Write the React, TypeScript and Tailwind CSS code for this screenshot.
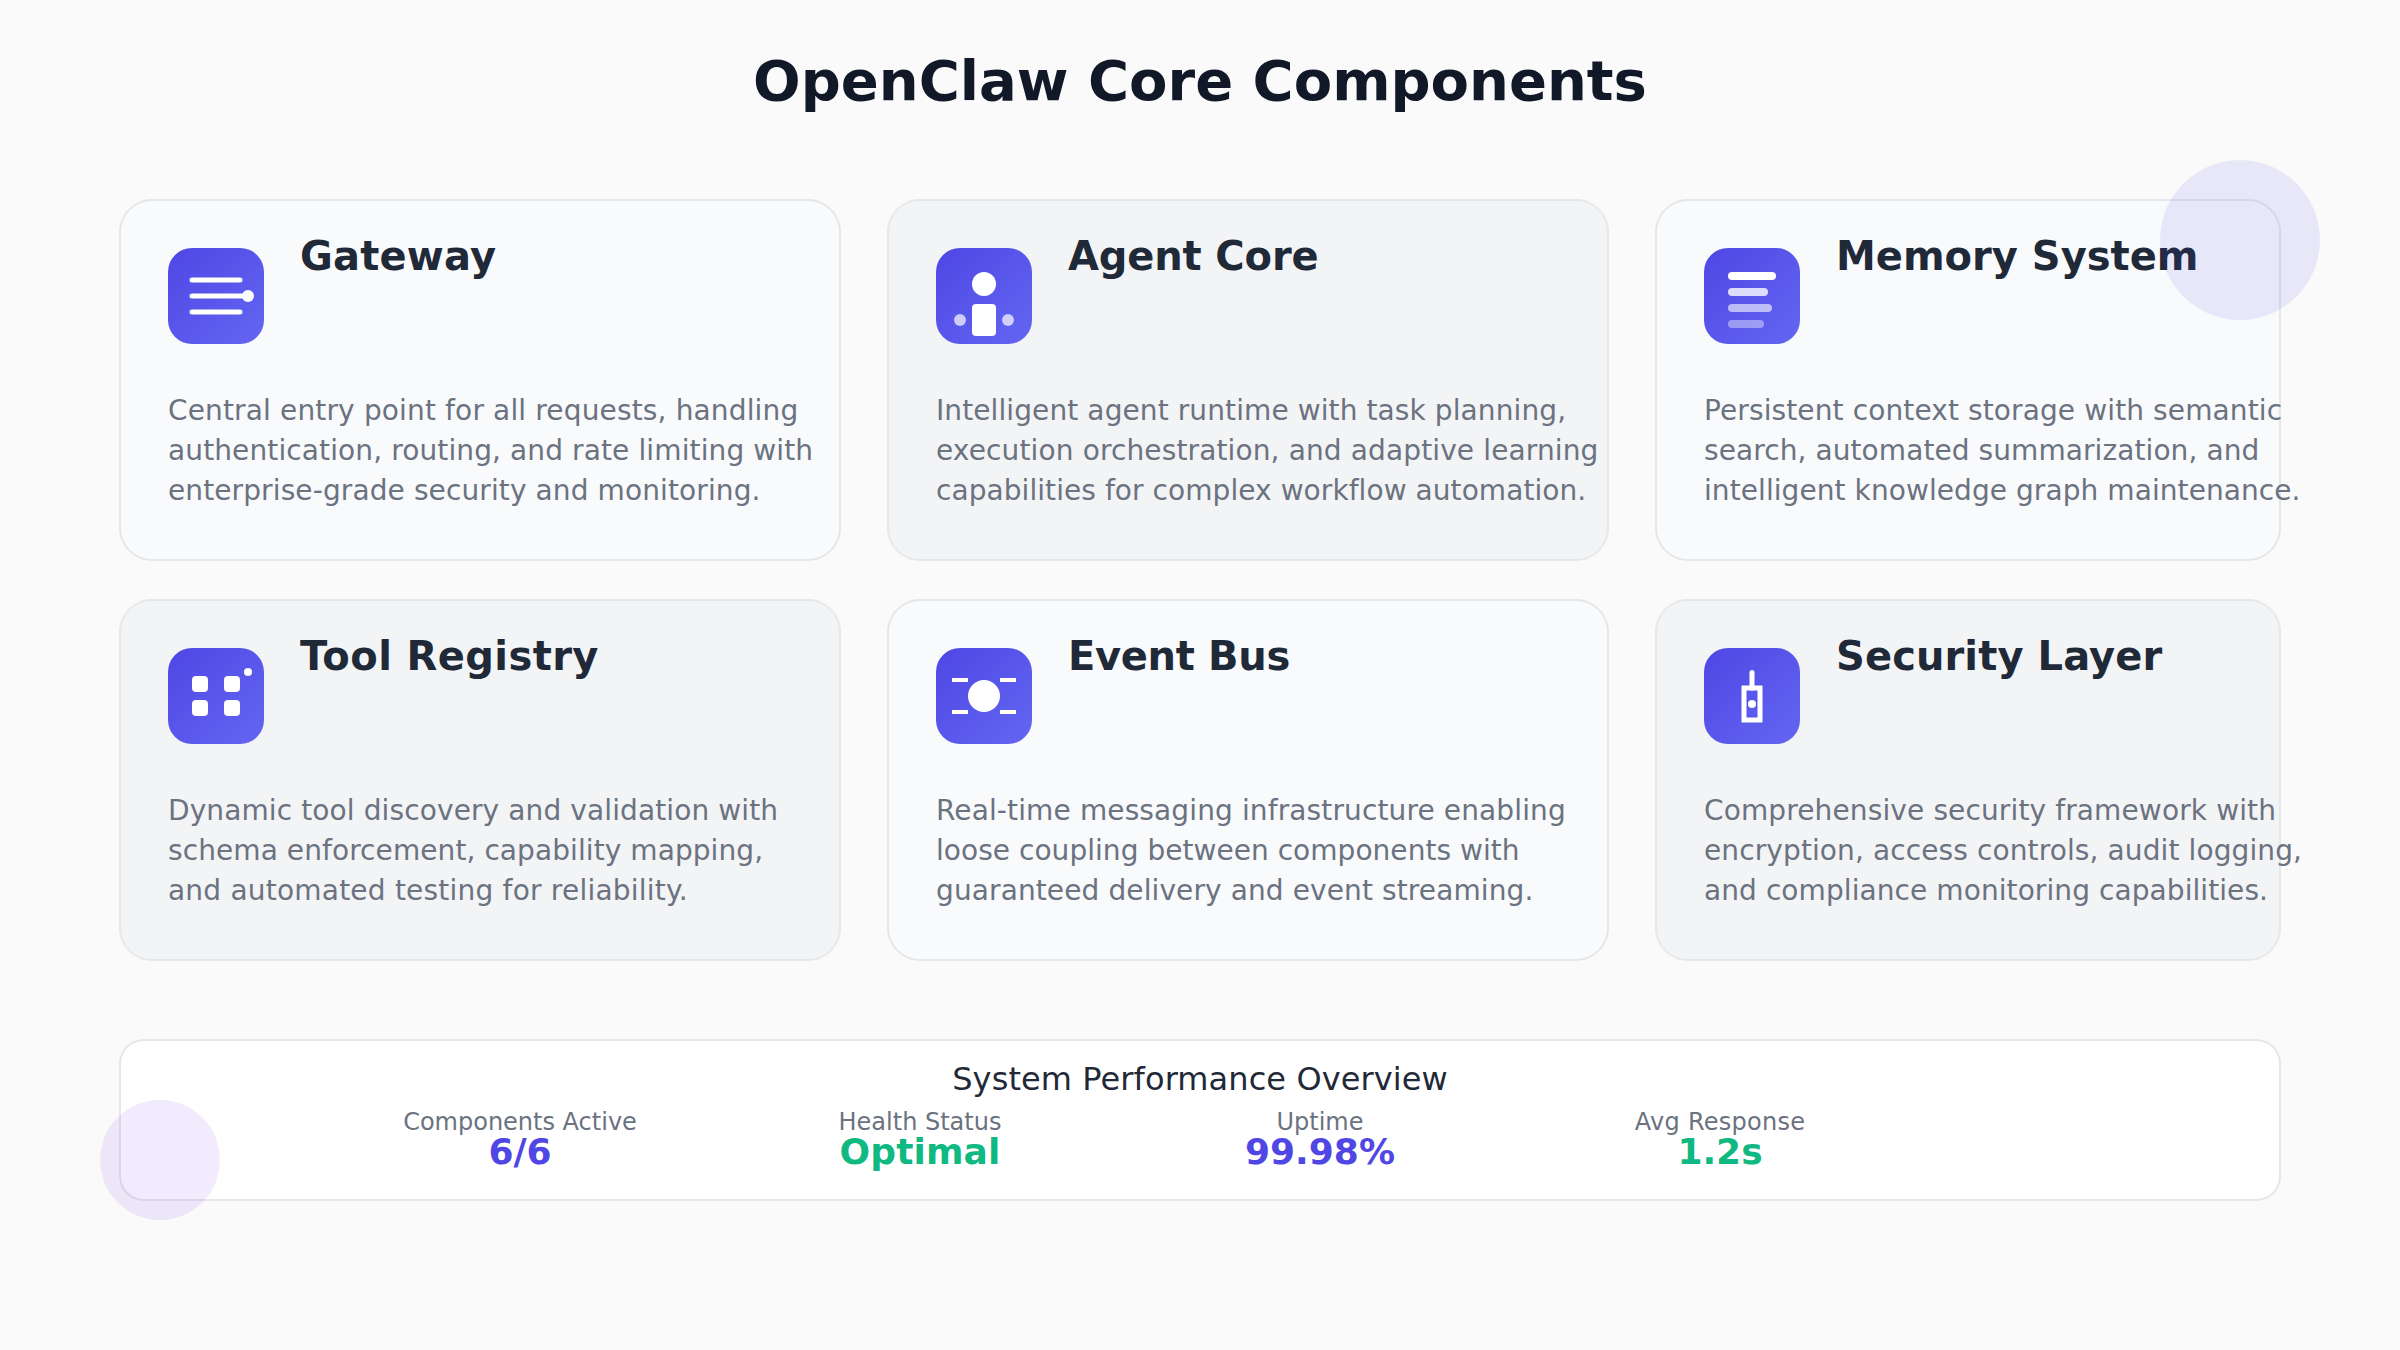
import React from "react";

function IconBox({ children }: { children: React.ReactNode }) {
  return (
    <div className="w-24 h-24 shrink-0 mt-4 rounded-3xl bg-linear-to-br from-[#4f46e5] to-[#6366f1]">
      <svg viewBox="0 0 96 96" className="block w-24 h-24" fill="none">
        {children}
      </svg>
    </div>
  );
}

const icons: Record<string, React.ReactNode> = {
  gateway: (
    <g stroke="#fff" strokeWidth="5" strokeLinecap="round">
      <line x1="24" y1="32" x2="72" y2="32" />
      <line x1="24" y1="48" x2="76" y2="48" />
      <line x1="24" y1="64" x2="72" y2="64" />
      <circle cx="80" cy="48" r="6" fill="#fff" stroke="none" />
    </g>
  ),
  agent: (
    <g fill="#fff">
      <circle cx="48" cy="36" r="12" />
      <rect x="36" y="56" width="24" height="32" rx="4" />
      <circle cx="24" cy="72" r="6" fillOpacity="0.7" />
      <circle cx="72" cy="72" r="6" fillOpacity="0.7" />
    </g>
  ),
  memory: (
    <g fill="#fff">
      <rect x="24" y="24" width="48" height="8" rx="4" />
      <rect x="24" y="40" width="40" height="8" rx="4" fillOpacity="0.8" />
      <rect x="24" y="56" width="44" height="8" rx="4" fillOpacity="0.6" />
      <rect x="24" y="72" width="36" height="8" rx="4" fillOpacity="0.4" />
    </g>
  ),
  tool: (
    <g fill="#fff">
      <rect x="24" y="28" width="16" height="16" rx="4" />
      <rect x="56" y="28" width="16" height="16" rx="4" />
      <rect x="24" y="52" width="16" height="16" rx="4" />
      <rect x="56" y="52" width="16" height="16" rx="4" />
      <circle cx="80" cy="24" r="4" />
    </g>
  ),
  event: (
    <g fill="#fff">
      <circle cx="48" cy="48" r="16" />
      <rect x="16" y="30" width="16" height="4" />
      <rect x="64" y="30" width="16" height="4" />
      <rect x="16" y="62" width="16" height="4" />
      <rect x="64" y="62" width="16" height="4" />
    </g>
  ),
  security: (
    <g>
      <line x1="48" y1="24.5" x2="48" y2="40" stroke="#fff" strokeWidth="5" strokeLinecap="round" />
      <rect x="40" y="40" width="16" height="32" stroke="#fff" strokeWidth="5" />
      <circle cx="48" cy="56" r="4" fill="#fff" />
    </g>
  ),
};

const cards = [
  { title: "Gateway", tt: "tracking-[0.2px]", icon: "gateway", alt: false, lines: [
    ["Central entry point for all requests, handling", "tracking-[0.15px]"],
    ["authentication, routing, and rate limiting with", "tracking-[0.115px]"],
    ["enterprise-grade security and monitoring.", "tracking-[0.11px]"],
  ] },
  { title: "Agent Core", tt: "tracking-[-0.15px]", icon: "agent", alt: true, lines: [
    ["Intelligent agent runtime with task planning,", "tracking-[0.1px]"],
    ["execution orchestration, and adaptive learning", "tracking-[0.13px]"],
    ["capabilities for complex workflow automation.", "tracking-[0.065px]"],
  ] },
  { title: "Memory System", tt: "tracking-[0px]", icon: "memory", alt: false, lines: [
    ["Persistent context storage with semantic", "tracking-[0.115px]"],
    ["search, automated summarization, and", "tracking-[0.08px]"],
    ["intelligent knowledge graph maintenance.", "tracking-[0.075px]"],
  ] },
  { title: "Tool Registry", tt: "tracking-[0.4px]", icon: "tool", alt: true, lines: [
    ["Dynamic tool discovery and validation with", "tracking-[0.11px]"],
    ["schema enforcement, capability mapping,", "tracking-[0.08px]"],
    ["and automated testing for reliability.", "tracking-[0.215px]"],
  ] },
  { title: "Event Bus", tt: "tracking-[-0.33px]", icon: "event", alt: false, lines: [
    ["Real-time messaging infrastructure enabling", "tracking-[0.125px]"],
    ["loose coupling between components with", "tracking-[0.04px]"],
    ["guaranteed delivery and event streaming.", "tracking-[0.11px]"],
  ] },
  { title: "Security Layer", tt: "tracking-[0.1px]", icon: "security", alt: true, lines: [
    ["Comprehensive security framework with", "tracking-[0.125px]"],
    ["encryption, access controls, audit logging,", "tracking-[0.11px]"],
    ["and compliance monitoring capabilities.", "tracking-[0.08px]"],
  ] },
];

const stats = [
  { label: "Components Active", lt: "tracking-[0px]", value: "6/6", vt: "tracking-[0px]", color: "text-[#4f46e5]" },
  { label: "Health Status", lt: "tracking-[0px]", value: "Optimal", vt: "tracking-[0.1px]", color: "text-[#10b981]" },
  { label: "Uptime", lt: "tracking-[0px]", value: "99.98%", vt: "tracking-[0px]", color: "text-[#4f46e5]" },
  { label: "Avg Response", lt: "tracking-[0.25px]", value: "1.2s", vt: "tracking-[0px]", color: "text-[#10b981]" },
];

export default function App() {
  return (
    <div className="relative w-[2400px] h-[1350px] overflow-hidden bg-[#fafafa] font-['DejaVu_Sans',sans-serif] px-[119px]">
      <h1 className="h-[199px] pt-[48px] text-center text-[56px] leading-[66px] font-bold text-[#111827]">
        OpenClaw Core Components
      </h1>

      <div className="grid grid-cols-[722px_722px_626px] auto-rows-[362px] gap-x-[46px] gap-y-[38px]">
        {cards.map((c) => (
          <div
            key={c.title}
            className={`rounded-[33px] border-2 border-[#e5e7eb] pl-[47px] pt-[31px] ${c.alt ? "bg-[#f3f4f6]" : "bg-[#f8fafc]"}`}
          >
            <div className="flex gap-[36px]">
              <IconBox>{icons[c.icon]}</IconBox>
              <h2 className={`text-[40px] leading-[48px] font-bold text-[#1f2937] ${c.tt}`}>{c.title}</h2>
            </div>
            <p className="mt-[47px] text-[28px] leading-[40px] text-[#6b7280] whitespace-nowrap">
              {c.lines.map(([l, t]) => (
                <span key={l} className={`block ${t}`}>{l}</span>
              ))}
            </p>
          </div>
        ))}
      </div>

      <div className="mt-[78px] h-[162px] rounded-[25px] border-2 border-[#e5e7eb] bg-white pt-[19px]">
        <div className="text-center text-[32px] leading-[38px] text-[#1f2937] tracking-[0.09px]">System Performance Overview</div>
        <div className="ml-[199px] mt-[11px] grid w-[1600px] grid-cols-4">
          {stats.map((s) => (
            <div key={s.label} className="text-center">
              <div className={`text-[24px] leading-[26px] text-[#6b7280] ${s.lt}`}>{s.label}</div>
              <div className={`text-[36px] leading-[34px] font-bold ${s.color} ${s.vt}`}>{s.value}</div>
            </div>
          ))}
        </div>
      </div>

      <div className="absolute left-[2160px] top-[160px] w-40 h-40 rounded-full bg-[#4f46e5] opacity-10" />
      <div className="absolute left-[100px] top-[1100px] w-[120px] h-[120px] rounded-full bg-[#7c3aed] opacity-10" />
    </div>
  );
}
